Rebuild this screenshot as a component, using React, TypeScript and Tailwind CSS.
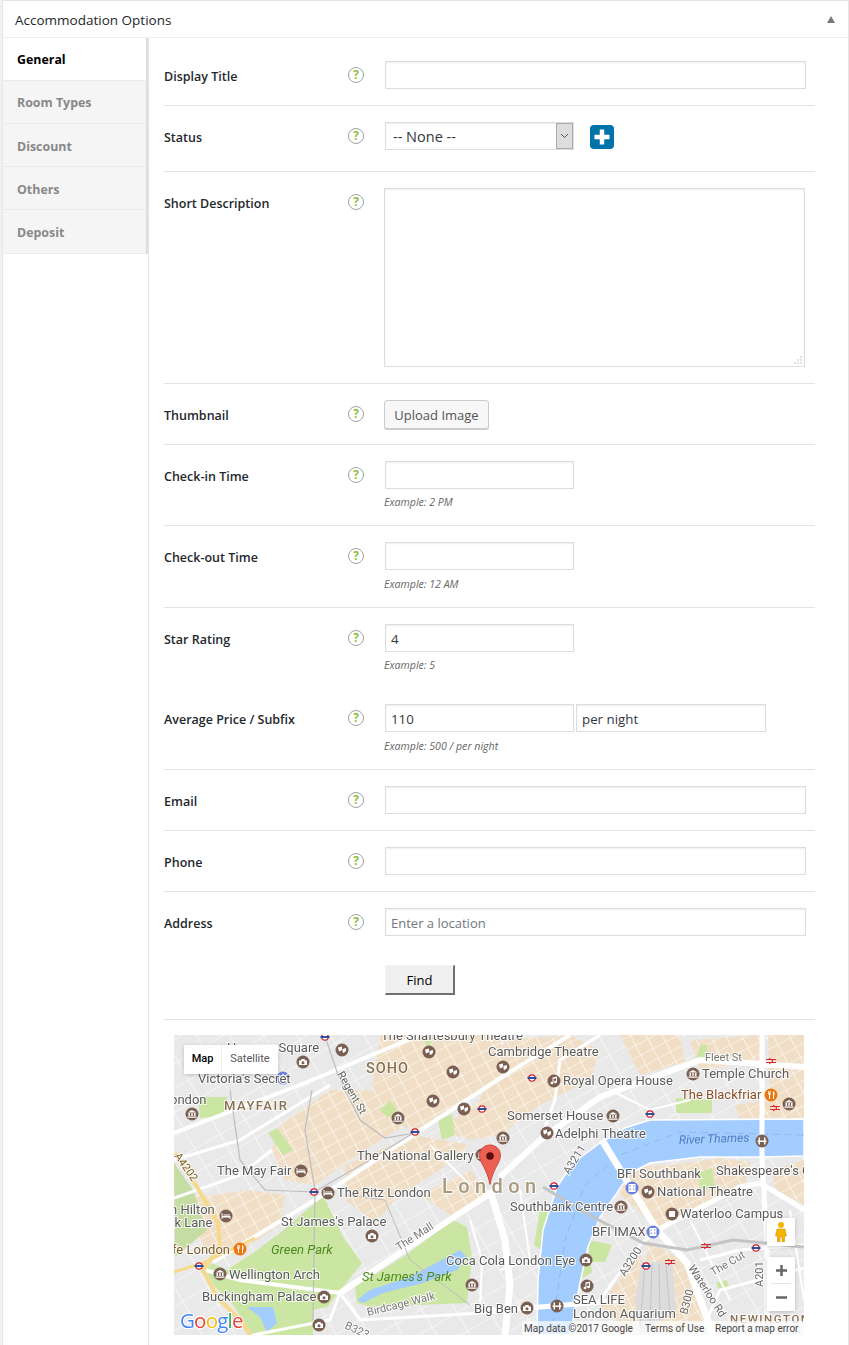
import React from "react";

const openSans = { fontFamily: '"Open Sans", sans-serif' };

const blocksPoly = [
  "380,1035 500,1035 505,1075 450,1112 412,1132 385,1115 372,1085",
  "505,1040 570,1035 600,1050 590,1080 540,1105 500,1135 470,1140 440,1130 480,1100",
  "280,1125 330,1090 372,1090 400,1128 350,1160 315,1185 285,1180 272,1150",
  "345,1165 415,1135 470,1145 440,1170 400,1195 375,1222 345,1200",
  "174,1200 250,1190 285,1195 280,1225 235,1255 205,1250 190,1215",
  "690,1040 760,1035 760,1060 700,1070",
  "768,1035 804,1035 804,1110 770,1112",
  "620,1035 680,1035 685,1062 640,1075",
  "610,1168 670,1165 720,1158 750,1162 745,1185 690,1215 660,1230 615,1190",
  "735,1105 804,1095 804,1118 740,1118",
  "648,1240 690,1265 705,1320 670,1335 640,1320",
  "600,1305 640,1250 650,1300 630,1335",
  "772,1170 804,1160 804,1205 775,1190",
  "420,1195 470,1170 490,1195 450,1215",
];

const parks = [
  "323,1197 303,1213 280,1233 253,1253 227,1270 212,1263 205,1270 215,1287 230,1300 247,1327 253,1335 313,1335 313,1310 327,1307 343,1287 362,1263 343,1237 327,1203",
  "355,1287 403,1257 453,1220 467,1227 472,1257 467,1303 370,1307 357,1303",
  "198,1097 227,1097 223,1117 200,1118",
  "268,1133 277,1128 293,1150 283,1155",
  "589,1240 612,1245 605,1262 588,1262",
  "676,1098 712,1100 712,1113 676,1113",
  "698,1172 712,1168 715,1190 700,1188",
  "540,1210 548,1212 542,1250 534,1245",
  "700,1045 708,1045 704,1060 696,1060",
  "424,1040 432,1040 428,1050",
  "380,1110 390,1100 397,1110 388,1118",
  "438,1120 452,1114 455,1135 442,1140",
  "578,1270 590,1262 592,1272 580,1280",
  "716,1283 726,1280 730,1288 720,1292",
];

const mainRoads: [string, number][] = [
  ["340,1293 460,1213 500,1187", 6],
  ["500,1177 540,1140 600,1097 700,1060 805,1067", 6],
  ["174,1133 300,1085 420,1035", 4],
  ["213,1262 323,1195 413,1135 505,1075 570,1035", 4],
  ["490,1190 505,1240 510,1285 505,1335", 7],
  ["490,1310 540,1307 590,1303 620,1300", 5],
  ["602,1140 657,1230 687,1263 713,1335", 7],
  ["762,1035 762,1157 767,1245 767,1335", 5],
  ["657,1230 740,1187 760,1183 805,1210", 5],
  ["540,1140 555,1100 560,1060 600,1035", 3],
  ["700,1260 740,1250 805,1245", 3],
  ["174,1198 240,1175 272,1150", 3],
  ["340,1293 240,1280 205,1270", 4],
  ["253,1335 330,1320 340,1293 360,1320 500,1312", 3],
  ["700,1335 720,1290 804,1268", 3],
  ["600,1300 640,1245 657,1230", 3],
  ["174,1160 240,1140 330,1085", 3],
  ["470,1220 482,1260 480,1310", 2],
  ["430,1145 470,1185", 2],
  ["520,1190 530,1260 500,1270", 2],
  ["690,1220 730,1300", 2],
  ["610,1090 650,1110 690,1100", 2],
  ["790,1210 804,1300", 2],
];

type Label = { x: number; y: number; t: string; size?: number; color?: string; rotate?: number; spacing?: number; weight?: number; italic?: boolean; halo?: boolean };

const labels: Label[] = [
  { x: 381, y: 1040, t: "The Shaftesbury Theatre", size: 13 },
  { x: 488, y: 1056, t: "Cambridge Theatre", size: 13 },
  { x: 563, y: 1085, t: "Royal Opera House", size: 13 },
  { x: 702, y: 1078, t: "Temple Church", size: 13 },
  { x: 681, y: 1099, t: "The Blackfriar", size: 13, color: "#8a4f2a" },
  { x: 705, y: 1061, t: "Fleet St", size: 11, color: "#777" },
  { x: 507, y: 1120, t: "Somerset House", size: 13 },
  { x: 555, y: 1138, t: "Adelphi Theatre", size: 13 },
  { x: 679, y: 1144, t: "River Thames", size: 12, color: "#4e7cc0", italic: true, rotate: -2, halo: false },
  { x: 617, y: 1178, t: "BFI Southbank", size: 13 },
  { x: 716, y: 1175, t: "Shakespeare's Globe", size: 13 },
  { x: 657, y: 1196, t: "National Theatre", size: 13 },
  { x: 510, y: 1211, t: "Southbank Centre", size: 13 },
  { x: 680, y: 1218, t: "Waterloo Campus", size: 13 },
  { x: 592, y: 1236, t: "BFI IMAX", size: 13 },
  { x: 446, y: 1265, t: "Coca Cola London Eye", size: 13 },
  { x: 573, y: 1304, t: "SEA LIFE", size: 13 },
  { x: 573, y: 1318, t: "London Aquarium", size: 13 },
  { x: 474, y: 1313, t: "Big Ben", size: 13 },
  { x: 357, y: 1160, t: "The National Gallery", size: 13 },
  { x: 217, y: 1175, t: "The May Fair", size: 13 },
  { x: 337, y: 1197, t: "The Ritz London", size: 13 },
  { x: 281, y: 1226, t: "St James's Palace", size: 13 },
  { x: 170, y: 1214, t: "n Hilton", size: 13 },
  { x: 170, y: 1227, t: "rk Lane", size: 13 },
  { x: 172, y: 1254, t: "fe London", size: 13, color: "#7d5a2a" },
  { x: 229, y: 1279, t: "Wellington Arch", size: 13 },
  { x: 202, y: 1301, t: "Buckingham Palace", size: 13 },
  { x: 271, y: 1254, t: "Green Park", size: 13, color: "#4c8a1e", italic: true, halo: false },
  { x: 362, y: 1281, t: "St James's Park", size: 13, color: "#4c8a1e", italic: true, halo: false },
  { x: 366, y: 1073, t: "SOHO", size: 14.5, color: "#8a7050", spacing: 1, weight: 500 },
  { x: 224, y: 1110, t: "MAYFAIR", size: 13, color: "#8a7050", spacing: 1.5, weight: 500 },
  { x: 442, y: 1193, t: "London", size: 20, color: "#a89a80", spacing: 5.4, weight: 500 },
  { x: 170, y: 1104, t: "ondon", size: 13 },
  { x: 198, y: 1083, t: "Victoria's Secret", size: 13 },
  { x: 227, y: 1052, t: "Hanover Square", size: 13 },
  { x: 730, y: 1323, t: "NEWINGTON", size: 11.5, color: "#8a7050", spacing: 1.5, weight: 500 },
];

const rotated: Label[] = [
  { x: 337, y: 1074, t: "Regent St", size: 11, color: "#666", rotate: 60 },
  { x: 399, y: 1251, t: "The Mall", size: 11, color: "#777", rotate: -33 },
  { x: 368, y: 1316, t: "Birdcage Walk", size: 11, color: "#777", rotate: -14 },
  { x: 569, y: 1175, t: "A3211", size: 11, color: "#666", rotate: -58 },
  { x: 625, y: 1277, t: "A3200", size: 11, color: "#666", rotate: -58 },
  { x: 688, y: 1268, t: "Waterloo Rd", size: 11, color: "#666", rotate: 57 },
  { x: 713, y: 1276, t: "The Cut", size: 11, color: "#777", rotate: -30 },
  { x: 763, y: 1287, t: "A201", size: 11, color: "#666", rotate: -90 },
  { x: 687, y: 1315, t: "B300", size: 11, color: "#666", rotate: -75 },
  { x: 174, y: 1156, t: "A4202", size: 11, color: "#7b5a20", rotate: 55 },
  { x: 344, y: 1328, t: "B323", size: 11, color: "#777", rotate: 25 },
];

type Kind = "theatre" | "camera" | "hotel" | "museum" | "film" | "food" | "bag" | "square" | "music" | "bridge";

const BROWN = "#7b5f52";
const poi: [number, number, Kind][] = [
  [342, 1050, "theatre"], [429, 1052, "theatre"], [303, 1062, "camera"], [453, 1072, "theatre"],
  [433, 1101, "theatre"], [464, 1109, "theatre"], [398, 1118, "museum"], [192, 1114, "museum"],
  [301, 1171, "hotel"], [328, 1193, "hotel"], [226, 1216, "hotel"], [372, 1236, "camera"],
  [240, 1249, "food"], [220, 1274, "museum"], [324, 1297, "camera"], [319, 1325, "camera"],
  [472, 1285, "museum"], [283, 1078, "bag"], [503, 1138, "museum"], [503, 1067, "theatre"],
  [554, 1081, "music"], [693, 1074, "museum"], [771, 1095, "food"], [789, 1104, "museum"],
  [613, 1116, "museum"], [547, 1133, "theatre"], [762, 1141, "bridge"], [632, 1188, "film"],
  [648, 1192, "theatre"], [621, 1207, "museum"], [672, 1214, "square"], [653, 1232, "film"],
  [586, 1260, "camera"], [587, 1286, "music"], [557, 1306, "bridge"], [527, 1308, "camera"],
  [482, 1155, "museum"],
];

const tube = [[532, 1078], [650, 1114], [554, 1186], [646, 1266], [756, 1248], [325, 1037], [415, 1132], [482, 1109], [314, 1192], [199, 1266]];
const rail = [[771, 1061], [775, 1108], [706, 1246], [670, 1262]];

function PoiIcon({ x, y, kind }: { x: number; y: number; kind: Kind }) {
  const fill = kind === "food" ? "#e8780f" : kind === "film" || kind === "bag" ? "#6a7fdc" : BROWN;
  return (
    <g transform={`translate(${x} ${y})`}>
      <circle r={6.5} fill={fill} />
      {kind === "theatre" && <path d="M-4-2.500l4-1v3.500l-3 1.500zM0.500-1l3.500-1v3l-2.500 2-1-1z" fill="#fff" />}
      {kind === "camera" && <path d="M-4-1.500h1.800l.8-1.500h2.800l.8 1.500H4v4.500h-8z M0-.8a1.500 1.500 0 100 3 1.500 1.500 0 000-3z" fill="#fff" fillRule="evenodd" />}
      {kind === "hotel" && <path d="M-4.500-3h1v3h8v3h-1v-1.500h-7V3h-1zM-2.500-1.500h6.500V-.5h-6.500z" fill="#fff" />}
      {kind === "museum" && <path d="M0-4l4.500 2.500h-9zM-3.500-1h1.500v3h-1.500zM-.7-1H.7v3H-.7zM2-1h1.500v3H2zM-4.500 2.500h9v1.200h-9z" fill="#fff" />}
      {kind === "film" && <path d="M-3.500-4h7v8h-7z M-2.300-2.800v1.500h1v-1.500z M1.300-2.800v1.500h1v-1.500z M-2.300.5v1.500h1V.5z M1.300.5v1.500h1V.5z" fill="#fff" fillRule="evenodd" />}
      {kind === "food" && <path d="M-3-4v3.500h1V4h1V-.5h.800V-4h-.6v2.500h-.5V-4h-.5v2.500h-.5V-4zM2-4c1 0 1.500 1.500 1.500 3S3 .5 3 .5V4H2z" fill="#fff" />}
      {kind === "bag" && <path d="M-3.500-1.500h7l.5 4.500h-8zM-1.500-1.500c0-3 3-3 3 0" fill="#fff" stroke="#fff" strokeWidth=".4" />}
      {kind === "square" && <rect x={-3} y={-3} width={6} height={6} rx={0.5} fill="#fff" />}
      {kind === "music" && <path d="M-1.500-3.500L3-4.500v5.500a1.500 1.300 0 11-1-1.200V-2.800l-2.500.6v4.200a1.500 1.300 0 11-1-1.200z" fill="#fff" />}
      {kind === "bridge" && <path d="M-4.500-.5h9v1.500h-9zM-3.500-3.500h1.500v7h-1.500zM2-3.500h1.500v7H2z" fill="#fff" />}
    </g>
  );
}

function MapArt() {
  return (
    <svg viewBox="174 1035 630 300" width={630} height={300} className="block blur-[0.3px]" role="img">
      <defs>
        <pattern id="streets" width="14" height="11" patternUnits="userSpaceOnUse" patternTransform="rotate(-28)">
          <path d="M0 0H14M0 0V11" stroke="#fff" strokeWidth="1.2" fill="none" />
        </pattern>
        <pattern id="streetsThin" width="29" height="21" patternUnits="userSpaceOnUse" patternTransform="rotate(-30)">
          <path d="M0 0H29M0 0V21" stroke="#fff" strokeWidth="1.2" fill="none" />
        </pattern>
      </defs>
      <rect x="174" y="1035" width="630" height="300" fill="#e9e9e9" />
      <rect x="174" y="1035" width="630" height="300" fill="url(#streetsThin)" />
      {blocksPoly.map((p) => (
        <g key={p}>
          <polygon points={p} fill="#f0dfc6" />
          <polygon points={p} fill="url(#streets)" />
        </g>
      ))}
      {parks.map((p) => (
        <polygon key={p} points={p} fill="#cbe6a3" />
      ))}
      <polygon points="174,1163 193,1190 207,1230 175,1257" fill="#c5dca2" />
      {/* thames */}
      <polygon
        points="804,1119 650,1120 625,1128 600,1143 573,1163 557,1187 543,1230 538,1280 537,1335 570,1335 573,1320 580,1283 588,1247 600,1217 617,1193 630,1173 650,1163 700,1157 757,1157 804,1156"
        fill="#a3ccff"
        stroke="#fff"
        strokeWidth="1.500"
      />
      <polyline points="804,1135 680,1132 620,1155 585,1185 565,1240 552,1330" fill="none" stroke="#88b4ee" strokeWidth="0.8" strokeDasharray="7 5" />
      <polygon points="357,1300 370,1290 410,1277 447,1257 460,1250 467,1257 457,1270 423,1283 383,1293 363,1303" fill="#a3ccff" />
      <polygon points="247,1307 273,1307 277,1323 267,1332 260,1317" fill="#a3ccff" />
      {mainRoads.map(([p, w]) => (
        <polyline key={p} points={p} fill="none" stroke="#fff" strokeWidth={w} />
      ))}
      <polyline points="175,1153 197,1187 218,1223 220,1247 203,1270 217,1297 243,1323 250,1335" fill="none" stroke="#f7d98c" strokeWidth="4" />
      <polyline points="174,1272 203,1263 255,1238" fill="none" stroke="#f7d98c" strokeWidth="3" />
      <polyline points="543,1187 593,1217 643,1243 687,1250 733,1240 805,1247" fill="none" stroke="#c4c4c4" strokeWidth="3" />
      <polyline points="325,1036 338,1075 360,1120 385,1138 415,1133" fill="none" stroke="#bdbdbd" strokeWidth="1.2" />
      <polyline points="312,1090 305,1130 315,1190 313,1320" fill="none" stroke="#bdbdbd" strokeWidth="1.2" />
      <polyline points="230,1090 240,1160 265,1190 314,1192 370,1160 415,1132" fill="none" stroke="#bdbdbd" strokeWidth="1.2" />
      <polyline points="345,1195 385,1200 410,1260 470,1305" fill="none" stroke="#bdbdbd" strokeWidth="1" />
      <polygon points="642,1262 672,1262 676,1310 640,1335 635,1300" fill="#dcdcdc" />
      <path d="M645 1264L640 1330M652 1264L650 1326M659 1264L660 1320M666 1264L670 1314" stroke="#c4c4c4" strokeWidth="1" fill="none" />

      {poi.map(([x, y, k]) => (
        <PoiIcon key={`${x}-${y}`} x={x} y={y} kind={k} />
      ))}
      {tube.map(([x, y]) => (
        <g key={`${x}-${y}`}>
          <circle cx={x} cy={y} r={3.2} fill="#fff" stroke="#c8202c" strokeWidth={1.2} />
          <rect x={x - 4.5} y={y - 0.9} width={9} height={1.8} fill="#1c3f94" />
        </g>
      ))}
      {rail.map(([x, y]) => (
        <path key={`${x}-${y}`} d={`M${x - 5} ${y - 1.5}H${x + 5}M${x - 5} ${y + 1.5}H${x + 5}M${x - 2} ${y - 3}L${x + 2} ${y}L${x - 2} ${y + 3}`} stroke="#d8262c" strokeWidth={1} fill="none" />
      ))}

      <g style={{ fontFamily: "Roboto, sans-serif" }}>
        {[...labels, ...rotated].map((l) => (
          <text
            key={l.t}
            x={l.x}
            y={l.y}
            fontSize={l.size}
            fill={l.color ?? "#5a5a5a"}
            fontStyle={l.italic ? "italic" : undefined}
            fontWeight={l.weight}
            letterSpacing={l.spacing}
            stroke={l.halo === false ? "none" : "#fff"}
            strokeWidth={l.halo === false ? 0 : 2}
            strokeOpacity={0.85}
            paintOrder="stroke"
            transform={l.rotate ? `rotate(${l.rotate} ${l.x} ${l.y})` : undefined}
          >
            {l.t}
          </text>
        ))}
      </g>

      {/* marker */}
      <path d="M490 1145c-6 0-10.500 4.500-10.500 10.500 0 7 7.500 13 10.500 29 3-16 10.500-22 10.500-29 0-6-4.500-10.500-10.500-10.500z" fill="#ee5f53" stroke="#c9362a" strokeWidth="0.8" />
      <circle cx="490" cy="1156" r="3.800" fill="#5c0f0a" />

      <text x="180" y="1328" fontSize="20.500" fontWeight="500" stroke="#fff" strokeWidth="2" paintOrder="stroke" style={{ fontFamily: '"Open Sans", sans-serif' }} letterSpacing="-0.8">
        <tspan fill="#4285f4">G</tspan>
        <tspan fill="#ea4335">o</tspan>
        <tspan fill="#fbbc05">o</tspan>
        <tspan fill="#4285f4">g</tspan>
        <tspan fill="#34a853">l</tspan>
        <tspan fill="#ea4335">e</tspan>
      </text>
    </svg>
  );
}

function HelpIcon() {
  return (
    <span className="flex h-4 w-4 items-center justify-center rounded-full border border-[#a3a3a3] text-[12px] font-bold leading-none text-[#8dbf3f]">
      ?
    </span>
  );
}

function Row({ label, children, last, pt = 16, pb = 16 }: { label: string; children: React.ReactNode; last?: boolean; pt?: number; pb?: number }) {
  return (
    <div className={`flex ${last ? "" : "border-b border-[#e5e5e5]"}`} style={{ paddingTop: pt, paddingBottom: pb }}>
      <div className="w-[184px] shrink-0 pt-[9px] text-[12.5px] font-semibold leading-[14px] text-[#23282d]">{label}</div>
      <div className="w-[37px] shrink-0 pt-[6px]">
        <HelpIcon />
      </div>
      <div className="min-w-0 flex-1">{children}</div>
    </div>
  );
}

function TextBox({ value, placeholder, className }: { value?: string; placeholder?: string; className: string }) {
  return (
    <input
      readOnly
      value={value ?? ""}
      placeholder={placeholder}
      className={`block h-[28px] border border-[#ddd] bg-white px-[5px] pt-px text-[13.3px] text-[#32373c] shadow-[inset_0_1px_2px_rgba(0,0,0,0.07)] outline-none placeholder:text-[13px] placeholder:text-[#72777c] ${className}`}
    />
  );
}

function Hint({ className, children }: { className: string; children: React.ReactNode }) {
  return <p className={`-ml-px text-[10.6px] italic leading-[14px] text-[#666] ${className}`}>{children}</p>;
}

const tabs = ["General", "Room Types", "Discount", "Others", "Deposit"];

export default function App() {
  return (
    <div className="min-h-[1345px] w-[849px] bg-[#f1f1f1] pl-[2px]" style={openSans}>
      <div className="h-[1345px] w-[847px] border-x border-t border-[#e5e5e5] bg-white">
        <div className="relative flex h-[37px] items-center border-b border-[#eee] pl-[12px] pt-[2px] text-[13.5px] text-[#23282d]">
          Accommodation Options
          <span className="absolute right-[13px] top-[15px] h-0 w-0 border-x-[4px] border-b-[7px] border-x-transparent border-b-[#72777c]" />
        </div>
        <div className="flex">
          <div className="h-[1307px] w-[146px] shrink-0 border-r border-[#e5e5e5]">
            <div className="border-r-[2px] border-[#ddd] bg-[#f5f5f5]">
              {tabs.map((t, i) => (
                <div
                  key={t}
                  className={`flex items-center border-b border-[#eaeaea] pl-[14px] text-[12.4px] font-bold ${i >= 2 ? "pt-[4px]" : "pt-[2px]"} ${i === 4 ? "h-[44px]" : "h-[43px]"} ${i === 0 ? "bg-white text-black" : "text-[#888]"}`}
                >
                  {t}
                </div>
              ))}
            </div>
          </div>
          <div className="ml-[15px] w-[651px] shrink-0">
            <Row label="Display Title" pt={23}>
              <TextBox className="w-[421px]" />
            </Row>
            <Row label="Status" pb={21}>
              <div className="flex items-center">
                <div className="flex h-[28px] w-[189px] items-stretch border border-[#ddd] shadow-[inset_0_1px_2px_rgba(0,0,0,0.07)]">
                  <span className="flex-1 pl-[7px] text-[14.5px] leading-[28px] text-[#32373c]">-- None --</span>
                  <span className="flex w-[17px] items-center justify-center border border-[#aaa] bg-[#ddd]">
                    <svg width="9" height="6" viewBox="0 0 9 6" fill="none">
                      <path d="M1 1l3.500 3.500L8 1" stroke="#555" strokeWidth="1" />
                    </svg>
                  </span>
                </div>
                <svg width="24" height="24" viewBox="0 0 24 24" className="ml-[16px] mt-[2px]">
                  <rect width="24" height="24" rx="4" fill="#0073aa" />
                  <path d="M12 4.500v15M4.500 12h15" stroke="#fff" strokeWidth="4.500" />
                </svg>
              </div>
            </Row>
            <Row label="Short Description">
              <div className="relative -ml-px h-[179px] w-[421px] border border-[#ddd] shadow-[inset_0_1px_2px_rgba(0,0,0,0.07)]">
                <svg width="9" height="9" viewBox="0 0 9 9" className="absolute bottom-[2px] right-[2px]">
                  <path d="M7.500 1.500h1v1h-1zM4.500 4.500h1v1h-1zM7.500 4.500h1v1h-1zM1.500 7.500h1v1h-1zM4.500 7.500h1v1h-1zM7.500 7.500h1v1h-1z" fill="#888" />
                </svg>
              </div>
            </Row>
            <Row label="Thumbnail" pb={15}>
              <button className="-ml-px block h-[29px] w-[105px] rounded-[3px] border border-[#ccc] bg-[#f7f7f7] pt-[2px] text-[13px] text-[#555] shadow-[0_1px_0_#ccc]">
                Upload Image
              </button>
            </Row>
            <Row label="Check-in Time">
              <TextBox className="w-[189px]" />
              <Hint className="mt-[6px]">Example: 2 PM</Hint>
            </Row>
            <Row label="Check-out Time">
              <TextBox className="w-[189px]" />
              <Hint className="mt-[7px]">Example: 12 AM</Hint>
            </Row>
            <Row label="Star Rating" last>
              <TextBox value="4" className="w-[189px]" />
              <Hint className="mt-[6px]">Example: 5</Hint>
            </Row>
            <Row label="Average Price / Subfix">
              <div className="flex gap-[2px]">
                <TextBox value="110" className="w-[189px]" />
                <TextBox value="per night" className="w-[190px]" />
              </div>
              <Hint className="mt-[7px]">Example: 500 / per night</Hint>
            </Row>
            <Row label="Email">
              <TextBox className="w-[421px]" />
            </Row>
            <Row label="Phone">
              <TextBox className="w-[421px]" />
            </Row>
            <Row label="Address" pb={24}>
              <TextBox placeholder="Enter a location" className="w-[421px]" />
              <button className="mt-[29px] block h-[30px] w-[70px] border border-b-2 border-r-2 border-[#f4f4f4] border-b-[#707070] border-r-[#707070] bg-[#f0f0f0] pt-[2px] text-[13px] text-black">
                Find
              </button>
            </Row>
            <div className="relative ml-[10px] mt-[15px] h-[300px] w-[630px] overflow-hidden">
              <MapArt />
              <div className="absolute left-[10px] top-[10px] flex h-[29px] bg-white text-[11px] shadow-[0_1px_4px_rgba(0,0,0,0.2)]" style={{ fontFamily: "Roboto, sans-serif" }}>
                <span className="flex w-[38px] items-center justify-center border-r border-[#eee] font-medium text-black">Map</span>
                <span className="flex w-[56px] items-center justify-center text-[#565656]">Satellite</span>
              </div>
              <div className="absolute left-[593px] top-[183px] flex h-[28px] w-[28px] items-center justify-center bg-white shadow-[0_1px_4px_rgba(0,0,0,0.2)]">
                <svg width="12" height="20" viewBox="0 0 12 20">
                  <circle cx="6" cy="3" r="3" fill="#f5b400" />
                  <path d="M2 7h8l1.500 7H9.500v6H7v-5H5v5H2.500v-6H.5z" fill="#f5b400" stroke="#c98e00" strokeWidth="0.5" />
                </svg>
              </div>
              <div className="absolute left-[593px] top-[222px] flex h-[54px] w-[28px] flex-col items-center bg-white shadow-[0_1px_4px_rgba(0,0,0,0.2)]">
                <svg width="11" height="11" viewBox="0 0 11 11" className="mt-[8px]">
                  <path d="M5.500 0v11M0 5.500h11" stroke="#666" strokeWidth="2.500" />
                </svg>
                <span className="mt-[7px] h-px w-[20px] bg-[#e6e6e6]" />
                <svg width="11" height="3" viewBox="0 0 11 3" className="mt-[12px]">
                  <path d="M0 1.500h11" stroke="#666" strokeWidth="2.500" />
                </svg>
              </div>
              <div className="absolute bottom-0 right-0 flex h-[14px] w-[282px] items-center whitespace-nowrap bg-white/70 pl-[2px] text-[10px] text-[#444]" style={{ fontFamily: "Roboto, sans-serif" }}>
                <span className="w-[121px]">Map data ©2017 Google</span>
                <span className="w-[70px]">Terms of Use</span>
                <span>Report a map error</span>
              </div>
            </div>
          </div>
        </div>
      </div>
    </div>
  );
}
